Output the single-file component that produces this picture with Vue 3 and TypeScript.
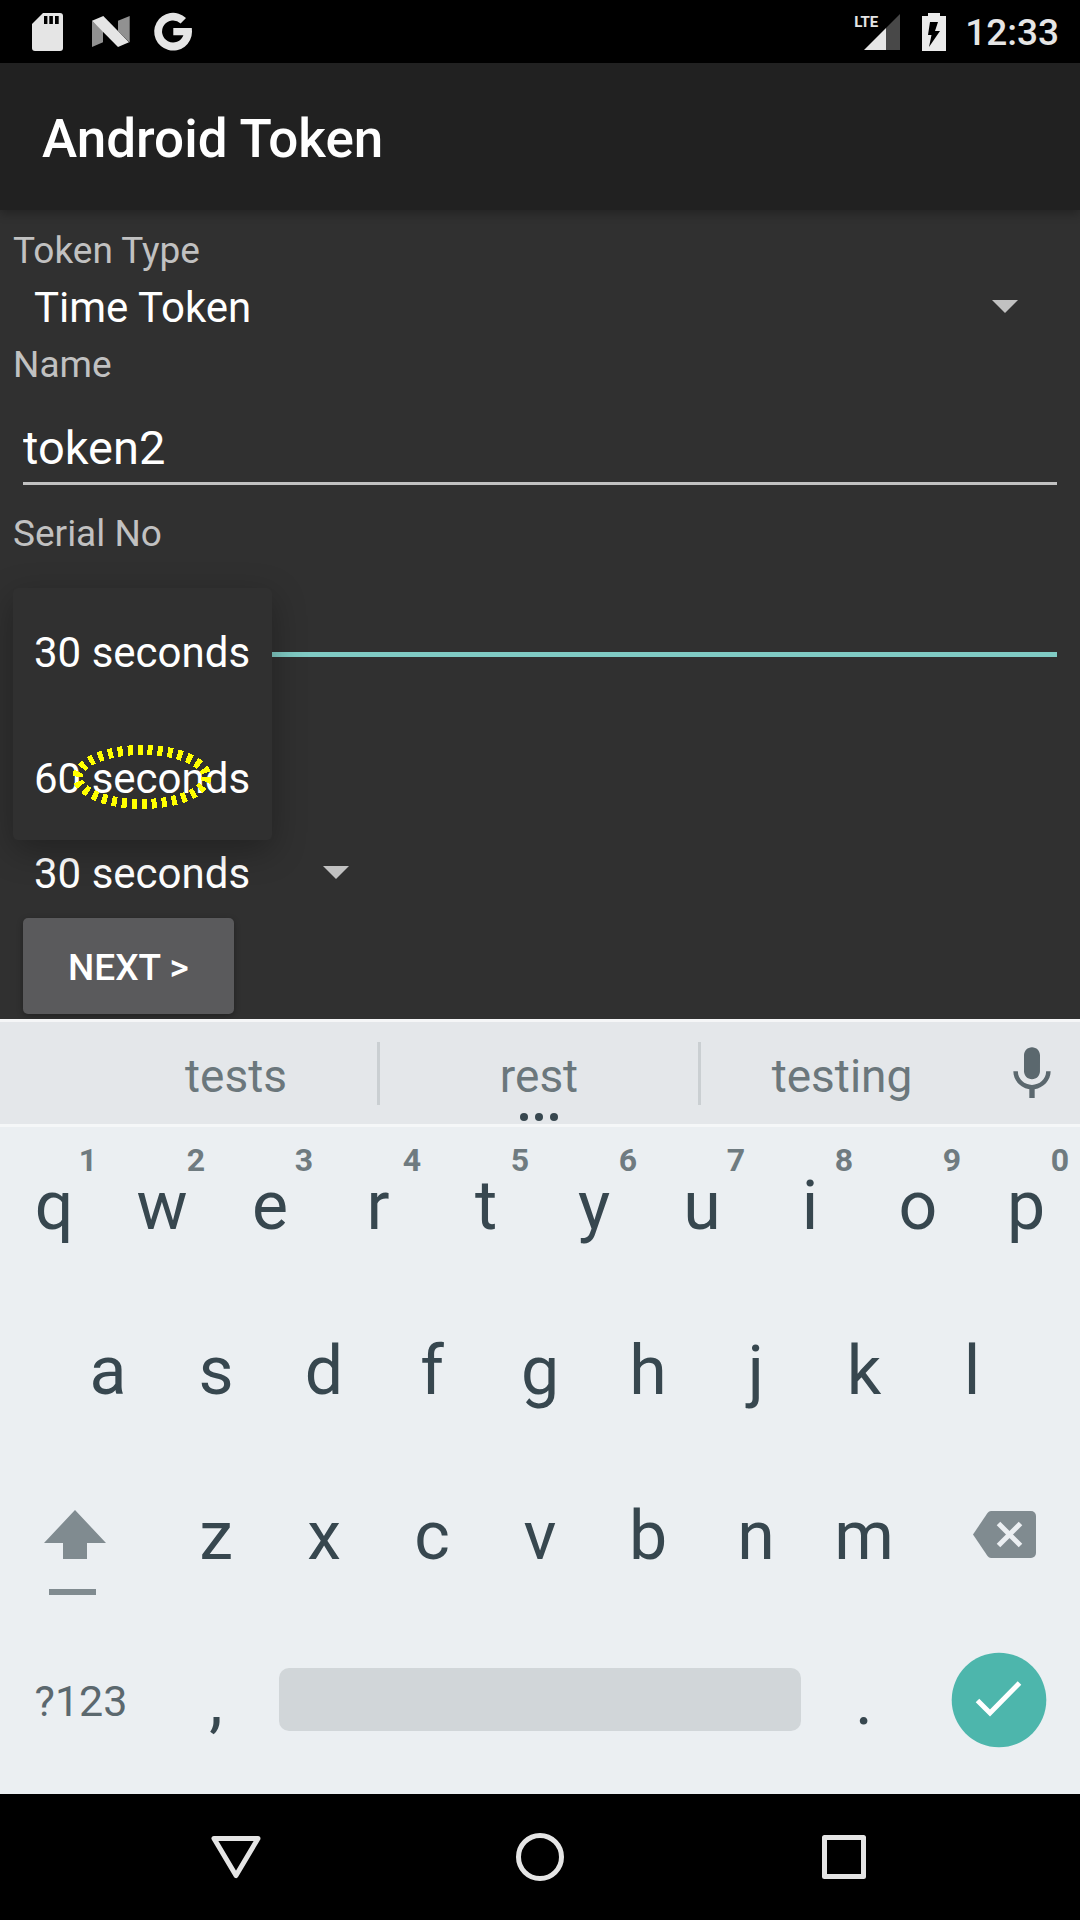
<script setup lang="ts">
import { ref } from 'vue'

interface Key {
  label: string
  hint?: string
}

const tokenType = ref('Time Token')
const name = ref('token2')
const serial = ref('')
const timeStep = ref('30 seconds')
const timeSteps = ['30 seconds', '60 seconds']

const digits = '1234567890'
const topRow: Key[] = [...'qwertyuiop'].map((label, i) => ({ label, hint: digits[i] }))
const homeRow: Key[] = [...'asdfghjkl'].map((label) => ({ label }))
const bottomRow: Key[] = [...'zxcvbnm'].map((label) => ({ label }))
</script>

<template>
  <div class="screen">
    <header class="status">
      <div class="notifications">
        <svg viewBox="0 0 63 63" aria-hidden="true">
          <path fill="#e5e5e5" d="M27 13H44a3 3 0 0 1 3 3V48a3 3 0 0 1-3 3H19a3 3 0 0 1-3-3V24z" />
          <path fill="#000" d="M28 16h3.4v8H28zM33.3 16h3.6v8h-3.6zM39 16h3.7v8H39z" />
        </svg>
        <svg viewBox="0 0 63 63" aria-hidden="true">
          <path fill="#919191" d="M13 20.7L24 31V42.3L13 47zM39 20.7L50.7 16V42.5L39 31z" />
          <path fill="#e5e5e5" d="M13 20.7L24.3 16L50 42.3L39 47z" />
        </svg>
        <svg viewBox="0 0 63 63" aria-hidden="true">
          <path
            fill="#e5e5e5"
            d="M44 17.9A18.9 18.9 0 1 0 50 31.7L49.8 28H31.3V35.2H41.4A11 11 0 1 1 38.6 23.4z"
          />
        </svg>
      </div>
      <div class="system">
        <div class="signal">
          <span class="lte">LTE</span>
          <svg width="36" height="36" viewBox="0 0 36 36" aria-hidden="true">
            <path fill="#484848" d="M22 14L36 0V36H22z" />
            <path fill="#e5e5e5" d="M0 36L22 14V36z" />
          </svg>
        </div>
        <svg width="24" height="38" viewBox="0 0 24 38" aria-hidden="true">
          <path fill="#ebebeb" d="M6 0H18V3H24V38H0V3H6z" />
          <path fill="#000" d="M8 9H16L13 18H18L7 34L9.5 22H6z" />
        </svg>
        <time class="clock">12:33</time>
      </div>
    </header>

    <div class="appbar"><h1>Android Token</h1></div>

    <main class="form">
      <label class="caption" for="type">Token Type</label>
      <div class="spinner">
        <select id="type" v-model="tokenType">
          <option>Time Token</option>
        </select>
        <svg class="arrow" viewBox="0 0 26 13" aria-hidden="true"><path d="M0 0H26L13 13z" /></svg>
      </div>

      <label class="caption" for="name">Name</label>
      <input id="name" v-model="name" class="field" type="text" />

      <label class="caption" for="serial">Serial No</label>
      <input id="serial" v-model="serial" class="field active" type="text" />

      <div class="spinner short">
        <select v-model="timeStep" aria-label="Time step">
          <option v-for="step in timeSteps" :key="step">{{ step }}</option>
        </select>
        <svg class="arrow" viewBox="0 0 26 13" aria-hidden="true"><path d="M0 0H26L13 13z" /></svg>
        <div class="popup">
          <button v-for="step in timeSteps" :key="step" type="button" @click="timeStep = step">
            {{ step }}
          </button>
          <svg class="ring" viewBox="0 0 140 64" aria-hidden="true">
            <ellipse cx="70" cy="32" rx="64.5" ry="27" />
          </svg>
        </div>
      </div>

      <button class="next" type="button">NEXT &gt;</button>
    </main>

    <section class="keyboard">
      <div class="suggestions">
        <button type="button">tests</button>
        <button type="button" class="middle">
          rest
          <svg class="more" viewBox="0 0 38 8" aria-hidden="true">
            <circle cx="4" cy="4" r="4" />
            <circle cx="19" cy="4" r="4" />
            <circle cx="34" cy="4" r="4" />
          </svg>
        </button>
        <button type="button">testing</button>
        <button type="button" class="mic" aria-label="Voice input">
          <svg width="64" height="64" viewBox="0 0 24 24" aria-hidden="true">
            <path
              fill="#5b686e"
              d="M12 14c1.66 0 2.99-1.34 2.99-3L15 5c0-1.66-1.34-3-3-3S9 3.34 9 5v6c0 1.66 1.34 3 3 3zm5.3-3c0 3-2.54 5.1-5.3 5.1S6.7 14 6.7 11H5c0 3.41 2.72 6.23 6 6.72V21h2v-3.28c3.28-.48 6-3.3 6-6.72h-1.7z"
            />
          </svg>
        </button>
      </div>

      <div class="keys">
        <div class="row">
          <button v-for="key in topRow" :key="key.label" type="button" class="key">
            {{ key.label }}<span class="hint">{{ key.hint }}</span>
          </button>
        </div>
        <div class="row inset">
          <button v-for="key in homeRow" :key="key.label" type="button" class="key">
            {{ key.label }}
          </button>
        </div>
        <div class="row">
          <button type="button" class="key wide" aria-label="Shift">
            <svg class="shift" width="62" height="86" viewBox="0 0 62 86" aria-hidden="true">
              <path d="M31 0L62 33H43V49H19V33H0zM5 79H52V85H5z" />
            </svg>
          </button>
          <button v-for="key in bottomRow" :key="key.label" type="button" class="key">
            {{ key.label }}
          </button>
          <button type="button" class="key wide" aria-label="Backspace">
            <svg class="erase" width="63" height="47" viewBox="0 0 63 47" aria-hidden="true">
              <path
                fill="#808b90"
                d="M18 0H58a5 5 0 0 1 5 5V42a5 5 0 0 1-5 5H18Q16 47 14.5 45L0 23.5L14.5 2Q16 0 18 0z"
              />
              <path stroke="#ebeff2" stroke-width="5" d="M25.5 12.5L47.5 34.5M47.5 12.5L25.5 34.5" />
            </svg>
          </button>
        </div>
        <div class="row">
          <button type="button" class="key wide symbols">?123</button>
          <button type="button" class="key">,</button>
          <button type="button" class="key space" aria-label="Space"><span></span></button>
          <button type="button" class="key">.</button>
          <button type="button" class="key wide" aria-label="Done">
            <svg class="done" width="96" height="96" viewBox="0 0 96 96" aria-hidden="true">
              <circle cx="48" cy="48" r="47.3" fill="#4db6ac" />
              <path fill="none" stroke="#fff" stroke-width="5" d="M26.5 48.5L39 61L68.5 31" />
            </svg>
          </button>
        </div>
      </div>
    </section>

    <nav class="navbar">
      <button type="button" aria-label="Back">
        <svg width="52" height="52" viewBox="0 0 52 52" aria-hidden="true">
          <path d="M4 7.5H48L26 44.5z" />
        </svg>
      </button>
      <button type="button" aria-label="Home">
        <svg width="52" height="52" viewBox="0 0 52 52" aria-hidden="true">
          <circle cx="26" cy="26" r="21.5" />
        </svg>
      </button>
      <button type="button" aria-label="Overview">
        <svg width="52" height="52" viewBox="0 0 52 52" aria-hidden="true">
          <rect x="6.5" y="6.5" width="39" height="39" />
        </svg>
      </button>
    </nav>
  </div>
</template>

<style>
body {
  background: #000;
}
</style>

<style scoped>
.screen {
  display: flex;
  flex-direction: column;
  min-height: 100vh;
  background: #303030;
  color: #fff;
  font-family: Roboto, 'Liberation Sans', sans-serif;
}

.screen * {
  box-sizing: border-box;
}

svg {
  display: block;
  flex: none;
}

button,
input,
select {
  margin: 0;
  padding: 0;
  border: 0;
  border-radius: 0;
  outline: 0;
  background: none;
  color: inherit;
  font: inherit;
  appearance: none;
}

.status {
  display: flex;
  justify-content: space-between;
  height: 63px;
  padding: 0 21px 0 16px;
  background: #000;
}

.notifications {
  display: flex;
}

.notifications svg {
  width: 63px;
  height: 63px;
}

.system {
  display: flex;
  align-items: center;
  gap: 19px;
}

.signal {
  position: relative;
  margin-right: 3px;
}

.lte {
  position: absolute;
  top: -1px;
  left: -10px;
  color: #e5e5e5;
  font-size: 15px;
  font-weight: 700;
  line-height: 18px;
}

.clock {
  padding-top: 3px;
  color: #e5e5e5;
  font-size: 37px;
  font-weight: 500;
  line-height: 44px;
}

.appbar {
  position: relative;
  display: flex;
  align-items: center;
  height: 147px;
  padding: 4px 42px 0;
  background: #212121;
  box-shadow: 0 3px 10px rgba(0, 0, 0, 0.3);
}

h1 {
  margin: 0;
  font-size: 53px;
  font-weight: 500;
  line-height: 62px;
}

.form {
  display: flex;
  flex: 1;
  flex-direction: column;
  align-items: stretch;
  padding: 15px 13px 5px;
}

.caption {
  padding-top: 2px;
  color: #c1c1c1;
  font-size: 37px;
  line-height: 48px;
}

.spinner {
  position: relative;
  height: 64px;
}

.spinner select {
  width: 100%;
  height: 64px;
  padding: 0 21px;
  font-size: 42px;
}

.arrow {
  position: absolute;
  top: 25px;
  right: 49px;
  width: 26px;
  height: 13px;
  fill: #c1c1c1;
  pointer-events: none;
}

.field {
  height: 96px;
  margin: 0 10px 23px;
  padding-top: 23px;
  border-bottom: 3px solid #c1c1c1;
  font-size: 47px;
}

.field.active {
  height: 99px;
  border-bottom: 5px solid #80cbc4;
}

.short {
  width: 385px;
  margin-top: 161px;
}

.popup {
  position: absolute;
  bottom: 100%;
  left: 0;
  display: flex;
  flex-direction: column;
  margin-bottom: 1px;
  border-radius: 5px;
  background: #303030;
  box-shadow: 0 10px 34px rgba(0, 0, 0, 0.3);
}

.popup button {
  height: 126px;
  padding: 2px 22px 0 21px;
  font-size: 42px;
  text-align: left;
}

.ring {
  position: absolute;
  top: 157px;
  left: 59px;
  width: 140px;
  height: 64px;
  fill: none;
  stroke: #ff0;
  stroke-width: 10;
  stroke-dasharray: 5 5;
  shape-rendering: crispEdges;
}

.next {
  align-self: flex-start;
  height: 96px;
  margin: 13px 10px 0;
  padding: 2px 45px 0;
  border-radius: 5px;
  background: #5a5a5c;
  box-shadow: 0 2px 6px rgba(0, 0, 0, 0.3);
  font-size: 37px;
  font-weight: 500;
}

.keyboard {
  position: relative;
  background: #ebeff2;
  color: #37474f;
}

.suggestions {
  display: flex;
  align-items: center;
  height: 108px;
  padding-left: 95px;
  border-top: 3px solid #f5f6f7;
  border-bottom: 3px solid #f5f7f8;
  background: #e4e7ea;
}

.suggestions button {
  position: relative;
  flex: 282;
  height: 102px;
  padding-top: 5px;
  color: #6b777c;
  font-size: 46px;
}

.suggestions .middle {
  flex: 324;
}

.suggestions .middle::before,
.suggestions .middle::after {
  position: absolute;
  top: 20px;
  left: 0;
  width: 3px;
  height: 63px;
  background: #cacfd2;
  content: '';
}

.suggestions .middle::after {
  right: 0;
  left: auto;
}

.more {
  position: absolute;
  bottom: 3px;
  left: calc(50% - 19px);
  width: 38px;
  height: 8px;
  fill: #37474f;
}

.suggestions .mic {
  display: flex;
  flex: none;
  align-items: center;
  justify-content: center;
  width: 97px;
  padding: 2px 0 0;
}

.keys {
  padding-bottom: 7px;
}

.row {
  display: flex;
}

.inset {
  padding: 0 5%;
}

.key {
  position: relative;
  display: flex;
  flex: 2;
  align-items: center;
  justify-content: center;
  height: 165px;
  padding-bottom: 8px;
  font-size: 68px;
}

.wide {
  flex: 3;
}

.hint {
  position: absolute;
  top: 17px;
  right: 11px;
  color: #6f7b80;
  font-size: 32px;
  font-weight: 700;
  line-height: 32px;
}

.shift {
  margin: 34px 12px 0 0;
  fill: #808b90;
}

.erase {
  margin: 0 0 2px 10px;
  fill: none;
}

.done {
  margin-bottom: 2px;
}

.symbols {
  color: #5b686e;
  font-size: 43px;
}

.space {
  flex: 10;
}

.space span {
  flex: 1;
  height: 63px;
  margin: 0 9px 2px;
  border-radius: 10px;
  background: #d1d6d9;
}

.navbar {
  display: flex;
  height: 126px;
  padding: 0 84px;
  background: #000;
}

.navbar button {
  display: flex;
  flex: 1;
  align-items: center;
  justify-content: center;
}

.navbar svg {
  fill: none;
  stroke: #e5e5e5;
  stroke-width: 5;
  stroke-linejoin: round;
}
</style>
